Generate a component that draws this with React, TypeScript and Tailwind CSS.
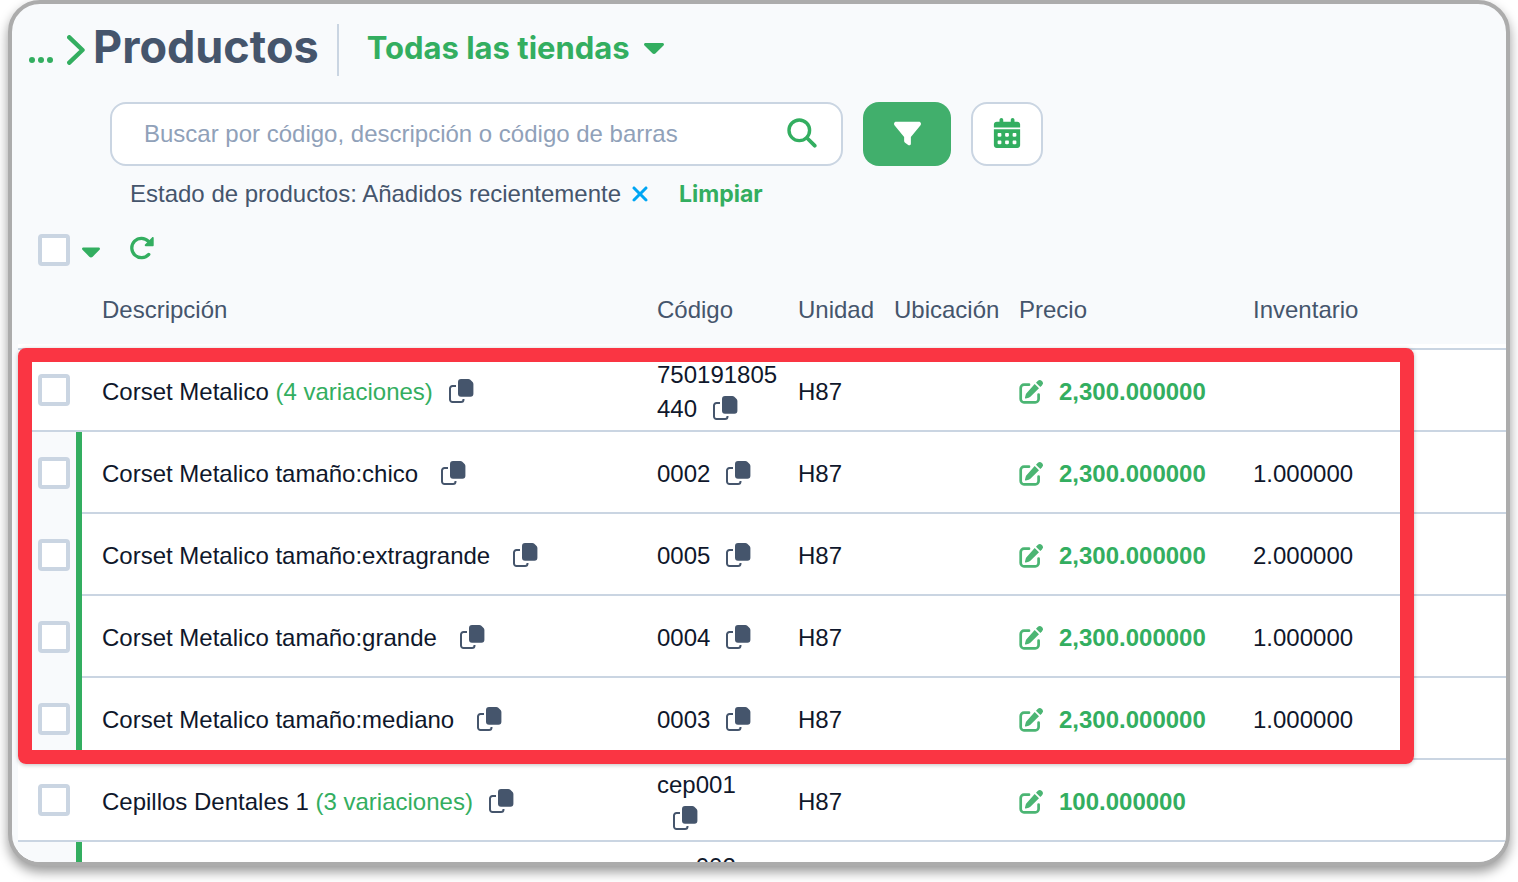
import { FaCalendarDays, FaFilter, FaXmark } from "react-icons/fa6";

type Product = {
  name: string;
  variations?: number;
  code: string;
  unit: string;
  price: string;
  stock?: string;
};

const products: Product[] = [
  { name: "Corset Metalico", variations: 4, code: "750191805440", unit: "H87", price: "2,300.000000" },
  { name: "Corset Metalico tamaño:chico", code: "0002", unit: "H87", price: "2,300.000000", stock: "1.000000" },
  { name: "Corset Metalico tamaño:extragrande", code: "0005", unit: "H87", price: "2,300.000000", stock: "2.000000" },
  { name: "Corset Metalico tamaño:grande", code: "0004", unit: "H87", price: "2,300.000000", stock: "1.000000" },
  { name: "Corset Metalico tamaño:mediano", code: "0003", unit: "H87", price: "2,300.000000", stock: "1.000000" },
  { name: "Cepillos Dentales 1", variations: 3, code: "cep001", unit: "H87", price: "100.000000" },
];

const checkboxClass =
  "block h-8 w-8 shrink-0 appearance-none rounded border-4 border-slate-300 bg-white checked:bg-[#33ae60]";

function Caret({ className }: { className: string }) {
  return (
    <svg viewBox="0 0 20 11" className={className} fill="currentColor" aria-hidden="true">
      <path d="M1.5 0h17c1.300 0 2 1.500 1 2.500l-7.600 7.600c-1.100 1.200-2.700 1.200-3.800 0L.5 2.500C-.5 1.500.2 0 1.500 0z" />
    </svg>
  );
}

function CopyButton() {
  return (
    <button type="button" aria-label="Copiar" className="inline-block px-4 pb-[6px] align-middle text-slate-600">
      <svg viewBox="0 0 25 24" className="block h-6 w-[25px]" aria-hidden="true">
        <path
          d="M7 7H3.500A2.500 2.500 0 0 0 1 9.500v11A2.500 2.500 0 0 0 3.500 23h8.500a2.500 2.500 0 0 0 2.500-2.500V20"
          fill="none"
          stroke="currentColor"
          strokeWidth="2"
        />
        <path
          d="M12 0h7.300c.8 0 1.500.3 2 .8l2.300 2.300c.5.5.8 1.200.8 2V14.700a3 3 0 0 1-3 3H12a3 3 0 0 1-3-3V3a3 3 0 0 1 3-3z"
          fill="currentColor"
        />
      </svg>
    </button>
  );
}

function EditIcon() {
  return (
    <svg viewBox="0 0 24 24" className="h-6 w-6 text-[#4bb573]" aria-hidden="true">
      <path
        d="M10 4.700H5A3.300 3.300 0 0 0 1.700 8v11A3.300 3.300 0 0 0 5 22.300h11.300a3.300 3.300 0 0 0 3.300-3.300v-4.500"
        fill="none"
        stroke="currentColor"
        strokeWidth="2.700"
        strokeLinecap="round"
      />
      <path
        d="M15.700 4l4.300 4.300-8.600 8.500c-.5.500-1.100.8-1.700 1l-2.700.7c-.7.200-1.200-.4-1-1l.7-2.800c.2-.7.500-1.200 1-1.700z"
        fill="currentColor"
      />
      <path d="M17 2.700L18.600 1.100a3 3 0 0 1 4.300 4.300L21.300 7z" fill="currentColor" />
    </svg>
  );
}

function ProductRow({ product }: { product: Product }) {
  const isParent = product.variations !== undefined;
  const cell = "h-[82px] border-b-2 border-slate-300 pt-1 px-[10px]";

  return (
    <tr>
      <td
        className={
          isParent
            ? "border-b-2 border-slate-300 pl-5"
            : "border-r-[6px] border-[#33ae60] bg-slate-50 pl-5"
        }
      >
        <input type="checkbox" aria-label={product.name} className={checkboxClass} />
      </td>
      <td className="h-[82px] border-b-2 border-slate-300 pt-1 pl-5 whitespace-nowrap">
        {product.name}{" "}
        {isParent && <span className="text-[#33ae60]">({product.variations} variaciones)</span>}
        <CopyButton />
      </td>
      <td className={cell}>
        <span className="break-all">{product.code}</span>
        <CopyButton />
      </td>
      <td className={cell}>{product.unit}</td>
      <td className={cell} />
      <td className={cell}>
        <button type="button" className="flex items-center gap-4 font-bold text-[#33ae60]">
          <EditIcon />
          {product.price}
        </button>
      </td>
      <td className={cell}>{product.stock}</td>
    </tr>
  );
}

export default function App() {
  return (
    <div className="h-screen bg-white pr-2 pb-4 pl-2 font-['Liberation_Sans',Arial,sans-serif] text-2xl leading-[34px] text-slate-900">
      <main className="h-full overflow-hidden rounded-[32px] border-4 border-[#acacac] bg-slate-50 pt-5 shadow-[0_6px_12px_rgba(0,0,0,0.4)]">
        <header className="flex h-[52px] items-center pl-[17px] font-['Inter',sans-serif] font-bold">
          <a href="#" className="flex items-center text-[#33ae60]" aria-label="Volver">
            <svg viewBox="0 0 24 6" className="mt-5 h-[6px] w-6" fill="currentColor" aria-hidden="true">
              <circle cx="3" cy="3" r="3" />
              <circle cx="12" cy="3" r="3" />
              <circle cx="21" cy="3" r="3" />
            </svg>
            <svg viewBox="0 0 18 30" className="ml-[14px] h-[30px] w-[18px]" aria-hidden="true">
              <path
                d="M2.300 2.300L15.500 15 2.300 27.700"
                fill="none"
                stroke="currentColor"
                strokeWidth="4.400"
                strokeLinecap="round"
                strokeLinejoin="round"
              />
            </svg>
          </a>
          <h1 className="ml-2 pb-[6px] text-[45px] text-slate-600">Productos</h1>
          <div className="ml-[18px] h-full w-[2px] bg-slate-300" />
          <button type="button" className="ml-7 flex items-center gap-[14px] pb-1 text-[31px] text-[#33ae60]">
            Todas las tiendas
            <Caret className="h-[11px] w-5" />
          </button>
        </header>

        <div className="mt-[26px] flex h-16 gap-5 pl-[98px]">
          <div className="flex w-[733px] items-center rounded-2xl border-2 border-slate-300 bg-white pr-6 pl-8">
            <input
              type="text"
              aria-label="Buscar productos"
              placeholder="Buscar por código, descripción o código de barras"
              className="min-w-0 flex-1 bg-transparent outline-none placeholder:text-slate-400"
            />
            <button type="button" aria-label="Buscar" className="pb-[2px] text-[#33ae60]">
              <svg viewBox="0 0 30 30" className="h-[30px] w-[30px]" aria-hidden="true">
                <g fill="none" stroke="currentColor" strokeLinecap="round">
                  <circle cx="12.300" cy="12.300" r="10.300" strokeWidth="3.400" />
                  <path d="M20 20l7.700 7.700" strokeWidth="3.800" />
                </g>
              </svg>
            </button>
          </div>
          <button
            type="button"
            aria-label="Filtrar"
            className="flex w-[88px] items-center justify-center rounded-2xl bg-[#41af6c] pb-[2px] text-white"
          >
            <FaFilter className="h-[27px] w-[27px]" />
          </button>
          <button
            type="button"
            aria-label="Fecha"
            className="flex w-[72px] items-center justify-center rounded-2xl border-2 border-slate-300 bg-white pb-[2px] text-[#33ae60]"
          >
            <FaCalendarDays className="h-[30px] w-[30px]" />
          </button>
        </div>

        <div className="mt-[10px] flex h-9 items-center pl-[118px] text-slate-600">
          <span>Estado de productos: Añadidos recientemente</span>
          <button type="button" aria-label="Quitar filtro" className="ml-[7px] text-sky-500">
            <FaXmark className="h-6 w-6" />
          </button>
          <button type="button" className="ml-[27px] font-['Inter',sans-serif] text-[23px] font-bold text-[#33ae60]">
            Limpiar
          </button>
        </div>

        <div className="mt-[22px] flex items-center pl-[26px] text-[#33ae60]">
          <input type="checkbox" aria-label="Seleccionar todo" className={checkboxClass} />
          <button type="button" aria-label="Opciones de selección" className="mt-1 ml-3">
            <Caret className="h-[11px] w-[18px]" />
          </button>
          <button type="button" aria-label="Actualizar" className="mb-1 ml-[30px]">
            <svg viewBox="0 0 24 24" className="h-6 w-6" aria-hidden="true">
              <path
                d="M18.800 18.400A9.700 9.700 0 1 1 18.500 5.300"
                fill="none"
                stroke="currentColor"
                strokeWidth="3.300"
                strokeLinecap="round"
              />
              <path d="M23.700 2v7.300c0 .6-.4 1-1 1h-7c-.9 0-1.300-1-.7-1.700l7-7.200c.6-.6 1.700-.2 1.700.6z" fill="currentColor" />
            </svg>
          </button>
        </div>

        <div className="relative ml-[6px] bg-white">
          <table className="w-full table-fixed border-separate border-spacing-0 text-left">
            <colgroup>
              <col className="w-16" />
              <col className="w-[565px]" />
              <col className="w-[141px]" />
              <col className="w-24" />
              <col className="w-[125px]" />
              <col className="w-[234px]" />
              <col />
            </colgroup>
            <thead>
              <tr className="text-slate-600 *:h-[84px] *:border-b-2 *:border-slate-300 *:bg-slate-50 *:px-[10px] *:pt-[6px] *:font-normal *:shadow-[inset_0_-4px_0_white]">
                <td />
                <th>
                  <span className="pl-[10px]">Descripción</span>
                </th>
                <th>Código</th>
                <th>Unidad</th>
                <th>Ubicación</th>
                <th>Precio</th>
                <th>Inventario</th>
              </tr>
            </thead>
            <tbody>
              {products.map((product) => (
                <ProductRow key={product.code} product={product} />
              ))}
              <ProductRow
                product={{ name: "", code: "cep002", unit: "", price: "" }}
              />
            </tbody>
          </table>

          {/* highlight around the first product and its variations */}
          <div className="pointer-events-none absolute top-[82px] right-[92px] left-0 h-[416px] rounded-lg border-[14px] border-[#fa3543] shadow-[0_1px_4px_rgba(0,0,0,0.25)]" />
        </div>
      </main>
    </div>
  );
}
